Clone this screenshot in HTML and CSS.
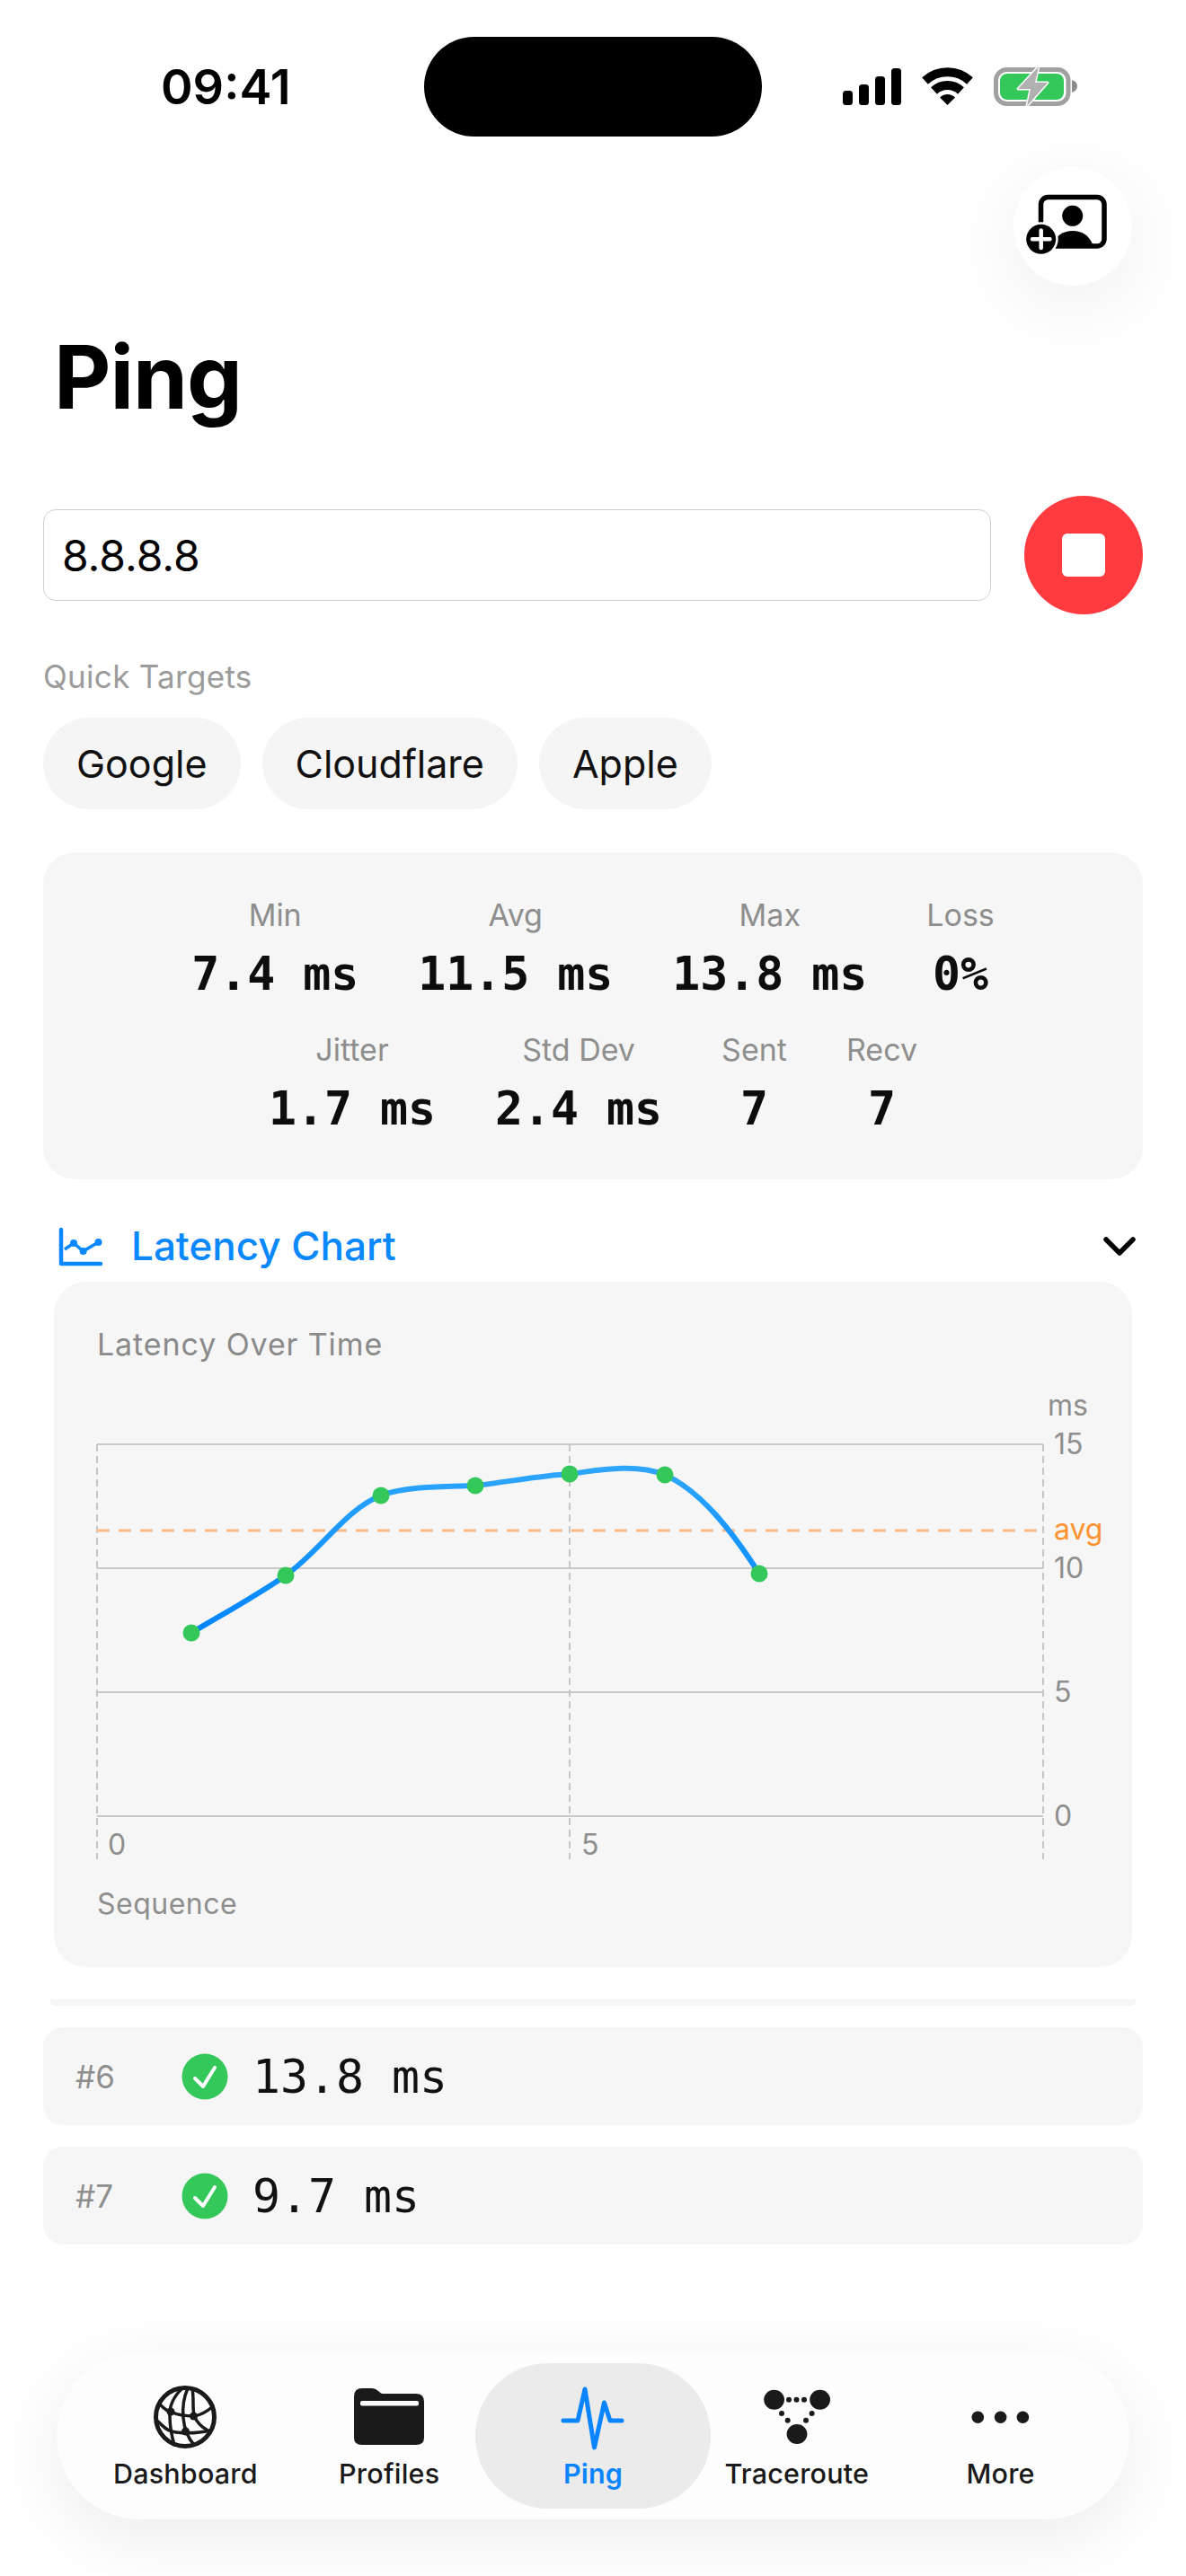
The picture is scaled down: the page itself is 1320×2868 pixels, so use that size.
FILE: index.html
```html
<!DOCTYPE html>
<html lang="en">
<head>
<meta charset="utf-8">
<title>Ping</title>
<link rel="stylesheet" href="styles.css">
</head>
<body>
<div class="screen">
  <header class="status">
    <div class="time">09:41</div>
    <div class="island"></div>
    <svg class="status-icons" viewBox="930 70 275 52" width="275" height="52">
      <g fill="#000">
        <rect x="937" y="101" width="11" height="16" rx="3.5"/>
        <rect x="955" y="94" width="11" height="23" rx="3.5"/>
        <rect x="973" y="85" width="11" height="32" rx="3.5"/>
        <rect x="991" y="76" width="11" height="41" rx="3.5"/>
        <path d="M1053.5 117 L1045 108.5 A12 12 0 0 1 1062 108.5Z"/>
      </g>
      <g fill="none" stroke="#000" stroke-width="10">
        <path d="M1028.5 90 A37 37 0 0 1 1078.5 90"/>
        <path d="M1038.5 101 A22 22 0 0 1 1068.5 101"/>
      </g>
      <rect x="1107.5" y="77.5" width="80.500" height="38" rx="12" fill="none" stroke="#a0a0a0" stroke-width="5"/>
      <rect x="1112" y="82" width="71" height="29" rx="8" fill="#34c85a"/>
      <path d="M1192 89 Q1198 91 1198 96 Q1198 101 1192 103Z" fill="#8c8c8c"/>
      <path d="M1155 74 L1132 99 H1146 L1142 118 L1165 92 H1151Z" fill="#b0b0b0" stroke="#fff" stroke-width="3" stroke-linejoin="round" paint-order="stroke"/>
    </svg>
  </header>

  <button class="fab" type="button" aria-label="Add profile">
    <svg viewBox="1128 186 132 132" width="132" height="132">
      <rect x="1158.500" y="219.500" width="70.500" height="54.500" rx="8" fill="none" stroke="#000" stroke-width="5.500"/>
      <circle cx="1193.700" cy="240.300" r="11.500"/>
      <path d="M1170 276 C1174 262 1184 257 1194 257 C1204 257 1212 262 1216 272 L1216 276Z"/>
      <circle cx="1158.700" cy="266.300" r="19" fill="#fff"/>
      <circle cx="1158.700" cy="266.300" r="16.500"/>
      <path d="M1149 266.300 H1168.500 M1158.700 256.500 V276" stroke="#fff" stroke-width="4.500" stroke-linecap="round"/>
    </svg>
  </button>

  <h1 class="title">Ping</h1>

  <main class="content">
    <div class="target-row">
      <input class="target-input" type="text" value="8.8.8.8" aria-label="Target">
      <button class="stop" type="button" aria-label="Stop"><span class="stop-square"></span></button>
    </div>

    <div class="quick-label">Quick Targets</div>
    <div class="chips">
      <span class="chip">Google</span>
      <span class="chip">Cloudflare</span>
      <span class="chip">Apple</span>
    </div>

    <section class="stats">
      <div class="stat-row">
        <div class="stat"><span class="stat-label">Min</span><span class="stat-value">7.4 ms</span></div>
        <div class="stat"><span class="stat-label">Avg</span><span class="stat-value">11.5 ms</span></div>
        <div class="stat"><span class="stat-label">Max</span><span class="stat-value">13.8 ms</span></div>
        <div class="stat"><span class="stat-label">Loss</span><span class="stat-value">0%</span></div>
      </div>
      <div class="stat-row">
        <div class="stat"><span class="stat-label">Jitter</span><span class="stat-value">1.7 ms</span></div>
        <div class="stat"><span class="stat-label">Std Dev</span><span class="stat-value">2.4 ms</span></div>
        <div class="stat"><span class="stat-label">Sent</span><span class="stat-value">7</span></div>
        <div class="stat"><span class="stat-label">Recv</span><span class="stat-value">7</span></div>
      </div>
    </section>

    <div class="section-head">
      <svg class="section-icon" viewBox="60 1360 60 52" width="60" height="52">
        <path d="M68 1368 V1406 H112" fill="none" stroke="#0a88ff" stroke-width="4.500" stroke-linecap="round" stroke-linejoin="round"/>
        <path d="M72 1390 L82 1383 L92.600 1392 L109.500 1382" fill="none" stroke="#0a88ff" stroke-width="3.500"/>
        <g fill="#0a88ff"><circle cx="82" cy="1383" r="4"/><circle cx="92.600" cy="1392" r="4"/><circle cx="109.500" cy="1382" r="4"/></g>
      </svg>
      <span class="section-title">Latency Chart</span>
      <svg class="chevron" viewBox="1222 1375 44 32" width="44" height="32">
        <path d="M1229 1384 L1244 1399 L1259 1384" fill="none" stroke="#000" stroke-width="5.500" stroke-linecap="round" stroke-linejoin="round"/>
      </svg>
    </div>

    <section class="chart-card">
      <div class="chart-title">Latency Over Time</div>
      <svg class="chart" viewBox="60 1540 1200 610" width="1200" height="610">
        <defs>
          <linearGradient id="lineGrad" gradientUnits="userSpaceOnUse" x1="0" y1="1635" x2="0" y2="1818">
            <stop offset="0" stop-color="#2ea6ff"/>
            <stop offset="1" stop-color="#0084ff"/>
          </linearGradient>
        </defs>
        <g class="grid-h">
          <line x1="108" x2="1161" y1="1608" y2="1608"/>
          <line x1="108" x2="1161" y1="1746" y2="1746"/>
          <line x1="108" x2="1161" y1="1884" y2="1884"/>
          <line x1="108" x2="1161" y1="2022" y2="2022"/>
        </g>
        <g class="grid-v">
          <line x1="108" x2="108" y1="1608" y2="2070"/>
          <line x1="634" x2="634" y1="1608" y2="2070"/>
          <line x1="1161" x2="1161" y1="1608" y2="2070"/>
        </g>
        <line class="avg-line" x1="108" x2="1155" y1="1704" y2="1704"/>
        <path class="latency" d="M213 1818 C248 1797 285 1777 318 1754 C358 1725 385 1680 424 1665 C450 1655 490 1655 529 1654 C565 1650 600 1643 634 1641 C660 1638 705 1628 740 1642 C780 1660 815 1705 845 1752"/>
        <g class="dots">
          <circle cx="213" cy="1818" r="9.500"/><circle cx="318" cy="1754" r="9.500"/><circle cx="424" cy="1665" r="9.500"/>
          <circle cx="529" cy="1654" r="9.500"/><circle cx="634" cy="1641" r="9.500"/><circle cx="740" cy="1642" r="9.500"/><circle cx="845" cy="1752" r="9.500"/>
        </g>
        <g class="axis-text">
          <text x="1166" y="1576">ms</text>
          <text x="1173" y="1619">15</text>
          <text x="1173" y="1757">10</text>
          <text x="1173" y="1895">5</text>
          <text x="1173" y="2033">0</text>
          <text x="120" y="2065">0</text>
          <text x="647" y="2065">5</text>
          <text class="axis-name" x="108" y="2131">Sequence</text>
        </g>
        <text class="avg-text" x="1173" y="1714">avg</text>
      </svg>
    </section>

    <div class="sliver"></div>

    <div class="ping-list">
      <div class="ping-row">
        <span class="seq">#6</span>
        <svg class="check" viewBox="0 0 52 52" width="52" height="52"><circle cx="26" cy="26" r="25.500" fill="#34c85a"/><path d="M15 28 L24 37 L37 16" fill="none" stroke="#fff" stroke-width="4" stroke-linecap="round" stroke-linejoin="round"/></svg>
        <span class="ms">13.8 ms</span>
      </div>
      <div class="ping-row">
        <span class="seq">#7</span>
        <svg class="check" viewBox="0 0 52 52" width="52" height="52"><circle cx="26" cy="26" r="25.500" fill="#34c85a"/><path d="M15 28 L24 37 L37 16" fill="none" stroke="#fff" stroke-width="4" stroke-linecap="round" stroke-linejoin="round"/></svg>
        <span class="ms">9.7 ms</span>
      </div>
    </div>
  </main>

  <nav class="tabbar">
    <a class="tab">
      <svg viewBox="161 2651 90 80" width="90" height="80">
        <circle cx="206" cy="2691" r="32.500" fill="none" stroke="#1a1a1a" stroke-width="5"/>
        <g fill="none" stroke="#1a1a1a" stroke-width="3.500" stroke-linecap="round">
          <path d="M203 2659 C193 2668 188 2680 189 2690 C189 2700 191 2712 194 2722"/>
          <path d="M209 2659 C204 2670 203 2682 204 2692 C205 2704 209 2714 216 2722"/>
          <path d="M214 2660 C216 2670 214 2680 216 2690 C219 2696 224 2702 230 2705"/>
          <path d="M178 2677 C183 2682 187 2685 190 2685 C198 2689 207 2690 216 2690 C223 2689 230 2685 236 2680"/>
          <path d="M176 2696 C182 2702 186 2706 191 2707 C198 2709 218 2710 233 2706"/>
        </g>
        <g fill="#1a1a1a"><circle cx="190" cy="2685" r="4.500"/><circle cx="215.500" cy="2690" r="4.500"/><circle cx="206.500" cy="2707" r="4.500"/></g>
      </svg>
      <span class="tab-label">Dashboard</span>
    </a>
    <a class="tab">
      <svg viewBox="388 2651 90 80" width="90" height="80">
        <path fill="#1a1a1a" d="M394 2668 Q394 2659 403 2659 H414 Q418 2659 421 2662 L424 2664.500 Q425 2665 428 2665 H463 Q472 2665 472 2674 V2714 Q472 2722 463 2722 H403 Q394 2722 394 2714Z"/>
        <rect x="401" y="2673" width="65" height="5.500" rx="2" fill="#fdfdfd"/>
      </svg>
      <span class="tab-label">Profiles</span>
    </a>
    <a class="tab tab-active">
      <svg viewBox="615 2651 90 80" width="90" height="80">
        <path d="M627 2695 H643 L651 2660 L661.500 2725 L672.500 2675 L679 2695 H692" fill="none" stroke="#0a84ff" stroke-width="5" stroke-linecap="round" stroke-linejoin="round"/>
      </svg>
      <span class="tab-label">Ping</span>
    </a>
    <a class="tab">
      <svg viewBox="840 2651 90 80" width="90" height="80">
        <g fill="#1a1a1a">
          <ellipse cx="859.600" cy="2671.700" rx="11.400" ry="11"/><ellipse cx="910.600" cy="2671.700" rx="11.400" ry="11"/><ellipse cx="885" cy="2710" rx="11.400" ry="11"/>
          <circle cx="876" cy="2671.700" r="3"/><circle cx="884.500" cy="2671.700" r="3"/><circle cx="893" cy="2671.700" r="3"/>
          <circle cx="868" cy="2687" r="3"/><circle cx="874.700" cy="2694.700" r="3"/><circle cx="901.600" cy="2687" r="3"/><circle cx="895" cy="2694.700" r="3"/>
        </g>
      </svg>
      <span class="tab-label">Traceroute</span>
    </a>
    <a class="tab">
      <svg viewBox="1068 2651 90 80" width="90" height="80">
        <g fill="#1a1a1a"><circle cx="1087.300" cy="2691.300" r="6.800"/><circle cx="1112.600" cy="2691.300" r="6.800"/><circle cx="1137.400" cy="2691.300" r="6.800"/></g>
      </svg>
      <span class="tab-label">More</span>
    </a>
  </nav>
</div>
</body>
</html>
```

FILE: styles.css
```css
* { box-sizing: border-box; }

html, body { margin: 0; padding: 0; }

body {
  background: #fff;
  font-family: Inter, "Liberation Sans", sans-serif;
  color: #000;
}

.screen {
  position: relative;
  width: 1320px;
  height: 2868px;
  overflow: hidden;
  background: #fff;
}

/* Status bar */
.status {
  display: grid;
  grid-template-columns: 472px 376px 1fr;
  align-items: center;
  height: 152px;
  padding-top: 41px;
}

.time {
  padding-left: 179px;
  font-size: 54px;
  font-weight: 600;
  line-height: 111px;
}

.island {
  height: 111px;
  background: #000;
  border-radius: 56px;
}

.status-icons { display: block; margin-left: 83px; margin-top: -1px; }

/* Floating action */
.fab {
  position: absolute;
  left: 1128px;
  top: 186px;
  width: 132px;
  height: 132px;
  padding: 0;
  border: 0;
  border-radius: 50%;
  background: #fff;
  box-shadow: 0 20px 90px rgba(0, 0, 0, 0.07);
}

.fab svg { display: block; }

/* Title */
.title {
  margin: 0;
  padding: 208px 0 0 60px;
  height: 400px;
  font-size: 98px;
  font-weight: 700;
  line-height: 120px;
  letter-spacing: -1px;
}

/* Content */
.content { padding: 0 48px; }

.target-row {
  display: flex;
  align-items: center;
  gap: 37px;
  height: 132px;
}

.target-input {
  flex: 1;
  height: 102px;
  padding: 0 20px;
  border: 1.5px solid #d0d0d0;
  border-radius: 14px;
  background: #fff;
  font-family: inherit;
  font-size: 48px;
  color: #000;
  outline: none;
}

.stop {
  display: flex;
  align-items: center;
  justify-content: center;
  width: 132px;
  height: 132px;
  padding: 0;
  border: 0;
  border-radius: 50%;
  background: #ff3b3f;
}

.stop-square {
  width: 48px;
  height: 48px;
  border-radius: 6px;
  background: #fff;
}

.quick-label {
  margin-top: 48px;
  font-size: 35px;
  line-height: 42px;
  letter-spacing: 0.3px;
  color: #9b9b9b;
}

.chips {
  display: flex;
  gap: 24px;
  margin-top: 25px;
}

.chip {
  display: flex;
  align-items: center;
  height: 102px;
  padding: 0 37px;
  border-radius: 51px;
  background: #f4f5f4;
  font-size: 43px;
  color: #111;
}

/* Stats */
.stats {
  display: flex;
  flex-direction: column;
  gap: 36px;
  height: 364px;
  margin-top: 48px;
  padding-top: 49px;
  border-radius: 36px;
  background: #f5f6f5;
}

.stat-row {
  display: flex;
  justify-content: center;
  gap: 66px;
}

.stat {
  display: flex;
  flex-direction: column;
  align-items: center;
  gap: 16px;
}

.stat-label {
  font-size: 34px;
  line-height: 42px;
  color: #8e8e8e;
}

.stat-value {
  font-family: "DejaVu Sans Mono", monospace;
  font-size: 51.5px;
  font-weight: 700;
  line-height: 56px;
  color: #0d0d0d;
  white-space: pre;
}

/* Chart section */
.section-head {
  display: flex;
  align-items: center;
  height: 52px;
  margin-top: 48px;
  margin-bottom: -1px;
  margin-left: 12px;
  margin-right: 4px;
}

.section-icon { display: block; flex: none; }

.section-title {
  margin-left: 26px;
  font-size: 44px;
  font-weight: 500;
  color: #0a88ff;
}

.chevron { display: block; margin-left: auto; }

.chart-card {
  height: 763px;
  margin: 15px 12px 0;
  padding-top: 49px;
  border-radius: 36px;
  background: #f5f6f5;
}

.chart-title {
  padding-left: 48px;
  font-size: 34px;
  line-height: 42px;
  letter-spacing: 0.9px;
  color: #8a8a8a;
}

.chart { display: block; margin: 22px 0 0 0; }

.grid-h line { stroke: #c8c8c8; stroke-width: 2; }
.grid-v line { stroke: #c6c6c6; stroke-width: 2; stroke-dasharray: 8 5; }
.avg-line { stroke: #fbb983; stroke-width: 3; stroke-dasharray: 14 10; }
.latency { fill: none; stroke: url(#lineGrad); stroke-width: 6; }
.dots circle { fill: #34c85a; }

.axis-text text {
  font-family: Inter, "Liberation Sans", sans-serif;
  font-size: 32px;
  fill: #8e8e8e;
}

.axis-text .axis-name { letter-spacing: 0.5px; }

.avg-text {
  font-family: Inter, "Liberation Sans", sans-serif;
  font-size: 32px;
  fill: #ff9230;
}

/* Ping results */
.sliver {
  height: 7px;
  margin: 36px 7px 0;
  border-radius: 0 0 20px 20px;
  background: #f5f6f5;
}

.ping-list {
  display: flex;
  flex-direction: column;
  gap: 24px;
  margin-top: 24px;
}

.ping-row {
  display: flex;
  align-items: center;
  height: 109px;
  padding-left: 36px;
  border-radius: 22px;
  background: #f5f6f5;
}

.seq {
  width: 118px;
  font-size: 35px;
  color: #8e8e8e;
}

.check { display: block; flex: none; }

.ms {
  margin-left: 27px;
  font-family: "DejaVu Sans Mono", monospace;
  font-size: 51.5px;
  color: #111;
  white-space: pre;
}

/* Tab bar */
.tabbar {
  position: absolute;
  left: 63px;
  top: 2619px;
  display: grid;
  grid-template-columns: repeat(5, 1fr);
  width: 1194px;
  height: 186px;
  padding: 12px 30px;
  border-radius: 93px;
  background: #fdfdfd;
  box-shadow: 0 20px 80px rgba(0, 0, 0, 0.08);
}

.tab {
  display: flex;
  flex-direction: column;
  align-items: center;
  padding-top: 20px;
  border-radius: 81px;
  color: #1a1a1a;
}

.tab svg { display: block; flex: none; }

.tab-label {
  margin-top: 5px;
  font-size: 30.5px;
  font-weight: 500;
  line-height: 36px;
  letter-spacing: 0.2px;
  white-space: nowrap;
}

.tab-active {
  margin: 0 -18px;
  background: #ebebeb;
  color: #0a84ff;
}

.tab-active .tab-label { font-weight: 600; }
```
